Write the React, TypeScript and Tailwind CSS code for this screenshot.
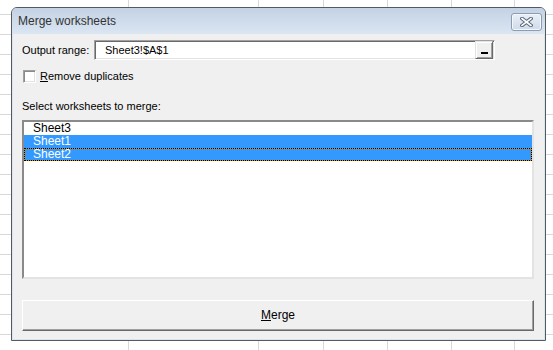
import clsx from 'clsx'

const ROWS = 18
const COLS = 7
const sheets = [
  { name: 'Sheet3', selected: false, focused: false },
  { name: 'Sheet1', selected: true, focused: false },
  { name: 'Sheet2', selected: true, focused: true },
]

function SheetGrid() {
  const cells = []
  for (let r = 0; r < ROWS; r++) {
    for (let c = 0; c < COLS; c++) {
      cells.push(
        <div
          key={`${r}-${c}`}
          className={clsx('border-[#d9d9d9]', c < COLS - 1 && 'border-r', r < ROWS - 1 && 'border-b')}
        />
      )
    }
  }
  return (
    <div className="grid h-[350px] w-[553px] grid-cols-[129px_130px_65px_64px_64px_63px_1fr] grid-rows-[15px_repeat(16,20px)_15px] bg-white">
      {cells}
    </div>
  )
}

function CloseButton() {
  return (
    <div className="mr-[3px] mt-[5px] flex h-[18px] w-[31px] items-center justify-center rounded-[3px] border border-[#8d9bb0] bg-gradient-to-b from-[#e9eff7] to-[#cfdbea] shadow-[inset_0_0_0_1px_#f4f7fb]">
      <svg width="13" height="10" viewBox="0 0 13 10">
        <path d="M2 1.5 L11 8.5 M11 1.5 L2 8.5" stroke="#5a6677" strokeWidth="3.6" strokeLinecap="square" />
        <path d="M2 1.5 L11 8.5 M11 1.5 L2 8.5" stroke="#ffffff" strokeWidth="1.6" strokeLinecap="square" />
      </svg>
    </div>
  )
}

function OutputRange() {
  return (
    <div className="flex items-center">
      <span className="w-[72px]">Output range:</span>
      <div className="flex h-[20px] w-[401px] items-center border border-b-white border-l-[#a0a0a0] border-r-white border-t-[#a0a0a0] bg-white shadow-[inset_1px_1px_0_#696969,inset_-1px_-1px_0_#e3e3e3]">
        <span className="flex-1 pl-[10px] text-[11px] text-black">Sheet3!$A$1</span>
        <div className="mr-[1px] flex h-[18px] w-[18px] items-end justify-center border border-b-[#696969] border-l-[#e3e3e3] border-r-[#696969] border-t-[#e3e3e3] bg-[#f0f0f0] pb-[4px] shadow-[inset_1px_1px_0_#ffffff,inset_-1px_-1px_0_#a0a0a0]">
          <div className="h-[2px] w-[7px] bg-black" />
        </div>
      </div>
    </div>
  )
}

function SheetList() {
  return (
    <div className="mt-[7px] h-[159px] w-[512px] border-2 border-b-[#e3e3e3] border-l-[#8a8a8a] border-r-[#e3e3e3] border-t-[#8a8a8a] bg-white text-[12px]">
      {sheets.map((s) =>
        s.focused ? (
          <div key={s.name} className="h-[13px] border border-dotted border-black bg-[#e08600]">
            <div className="h-full bg-[#3399ff] pl-[8px] leading-[11px] text-white">{s.name}</div>
          </div>
        ) : (
          <div
            key={s.name}
            className={clsx('h-[13px] pl-[9px] leading-[13px]', s.selected ? 'bg-[#3399ff] text-white' : 'text-black')}
          >
            {s.name}
          </div>
        )
      )}
    </div>
  )
}

export default function App() {
  return (
    <div className="relative h-[350px] w-[553px] overflow-hidden font-['Liberation_Sans',Arial,sans-serif]">
      <SheetGrid />
      <div className="absolute left-[11px] top-[7px] flex h-[334px] w-[535px] flex-col rounded-t-[6px] border border-[#555a60] bg-[#f0f0f0]">
        <div className="flex h-[26px] justify-between rounded-t-[5px] border-b border-[#dce6f2] bg-gradient-to-b from-[#c3d2e4] to-[#dae5f2]">
          <span className="pl-[6px] pt-[6px] text-[12px] leading-[14px] text-[#333]">Merge worksheets</span>
          <CloseButton />
        </div>
        <div className="flex flex-1 flex-col border-x border-b border-[#dbe5f1] pl-[9px] pt-[6px] text-[11px] text-black">
          <OutputRange />
          <div className="mt-[8px] flex items-center">
            <div className="ml-[1px] h-[13px] w-[13px] border border-b-white border-l-[#a0a0a0] border-r-white border-t-[#a0a0a0] bg-white shadow-[inset_1px_1px_0_#8a8a8a,inset_-1px_-1px_0_#e3e3e3]" />
            <span className="ml-[4px]">
              <span className="underline">R</span>emove duplicates
            </span>
          </div>
          <div className="mt-[14px] leading-[14px]">Select worksheets to merge:</div>
          <SheetList />
          <div className="mt-[21px] flex h-[31px] w-[512px] items-center justify-center border border-b-[#696969] border-l-white border-r-[#696969] border-t-white bg-[#f0f0f0] text-[12px] shadow-[inset_-1px_-1px_0_#a0a0a0]">
            <span>
              <span className="underline">M</span>erge
            </span>
          </div>
        </div>
      </div>
    </div>
  )
}
